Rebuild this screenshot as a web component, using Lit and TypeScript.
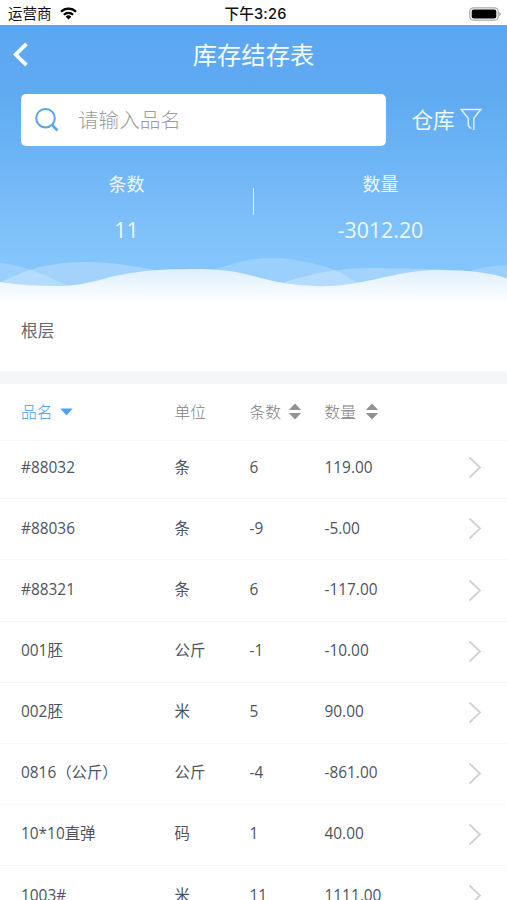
import { LitElement, html, svg, css } from "lit";
import { customElement } from "lit/decorators.js";

interface Item {
  name: string;
  unit: string;
  count: string;
  qty: string;
}

const items: Item[] = [
  { name: "#88032", unit: "条", count: "6", qty: "119.00" },
  { name: "#88036", unit: "条", count: "-9", qty: "-5.00" },
  { name: "#88321", unit: "条", count: "6", qty: "-117.00" },
  { name: "001胚", unit: "公斤", count: "-1", qty: "-10.00" },
  { name: "002胚", unit: "米", count: "5", qty: "90.00" },
  { name: "0816（公斤）", unit: "公斤", count: "-4", qty: "-861.00" },
  { name: "10*10直弹", unit: "码", count: "1", qty: "40.00" },
  { name: "1003#", unit: "米", count: "11", qty: "1111.00" },
];

const sortIcon = html`<svg class="sort" width="14" height="17" viewBox="0 0 14 17">
  <path d="M7 .5 13.2 7H.8zM7 16.5 13.2 10H.8z" fill="#929292" />
</svg>`;

const waves = svg`
  <defs>
    <linearGradient id="front" gradientUnits="userSpaceOnUse" x1="0" y1="12" x2="0" y2="50">
      <stop offset="0" stop-color="#dceefe" />
      <stop offset=".5" stop-color="#eff7fe" />
      <stop offset="1" stop-color="#fff" />
    </linearGradient>
  </defs>
  <path d="M0 8C14 9 24 13 34 16C48 21 58 27 70 31V60H0Z" fill="#fff" opacity=".2" />
  <path d="M0 28C18 18 44 7 85 7C112 7 134 11 155 15L180 40H0Z" fill="#fff" opacity=".25" />
  <path d="M213 15C236 7 252 3 272 3C298 3 316 9 332 14C345 19 354 26 364 32H213Z" fill="#fff" opacity=".2" />
  <path d="M285 27C310 19 336 13 370 13C400 13 430 14 450 15V36H285Z" fill="#fff" opacity=".25" />
  <path d="M470 16C482 12 494 10.500 507 10.500V40H470Z" fill="#fff" opacity=".2" />
  <path d="M0 27C20 30 38 31 57 31C88 31 100 23 128 18.500C152 14.500 172 14 200 14C236 14 254 22 278 27C300 31 324 33 350 29C384 24 404 15 440 15C470 15 492 18 507 23.500V60H0Z" fill="url(#front)" />
`;

@customElement("app-root")
export class AppRoot extends LitElement {
  static styles = css`
    :host {
      display: block;
      width: 507px;
      height: 900px;
      overflow: hidden;
      background: #fff;
      color: #4c545f;
      font-family: "Open Sans", "Noto Sans CJK SC", sans-serif;
    }
    svg {
      display: block;
      flex: none;
    }
    .status {
      display: grid;
      grid-template-columns: 1fr auto 1fr;
      align-items: center;
      height: 25px;
      padding: 2px 6px 0 8px;
      box-sizing: border-box;
      color: #111;
      font: 14.5px/20px "Inter", "Noto Sans CJK SC", sans-serif;
    }
    .carrier {
      display: flex;
      align-items: center;
      gap: 8px;
    }
    .clock {
      padding-left: 2px;
      font-weight: 500;
      font-size: 14.6px;
      letter-spacing: 0.2px;
    }
    .battery {
      justify-self: end;
    }
    .hero {
      position: relative;
      height: 280px;
      background: linear-gradient(#5ca7f1, #60aaf2 70px, #6bb4f5 130px, #7abcf8 180px, #84c5fc 235px);
      color: #fff;
    }
    .waves {
      position: absolute;
      left: 0;
      bottom: -10px;
    }
    .nav {
      display: grid;
      grid-template-columns: 60px 1fr 60px;
      align-items: center;
      height: 59px;
      padding-left: 13px;
      padding-right: 13px;
    }
    .title {
      padding-bottom: 2px;
      text-align: center;
      font: 400 24.3px/36px "Noto Sans CJK SC", sans-serif;
      color: #f4faff;
    }
    .tools {
      display: flex;
      align-items: center;
      padding: 10px 25px 0 21px;
    }
    .search {
      display: flex;
      align-items: center;
      gap: 19px;
      width: 364.5px;
      height: 51.5px;
      box-sizing: border-box;
      padding-left: 14px;
      border-radius: 5px;
      background: #fff;
      color: #9c9c9c;
      font: 300 20.6px/30px "Noto Sans CJK SC", sans-serif;
    }
    .search span,
    .filter span {
      padding-bottom: 2px;
    }
    .filter {
      display: flex;
      align-items: center;
      gap: 5px;
      margin-left: 26px;
      font: 400 21.6px/30px "Noto Sans CJK SC", sans-serif;
      color: #eff7ff;
    }
    .stats {
      display: grid;
      grid-template-columns: 1fr 1px 1fr;
      padding-top: 23px;
      text-align: center;
      color: #eff7ff;
    }
    .label {
      font: 400 18px/28px "Noto Sans CJK SC", sans-serif;
    }
    .value {
      margin-top: 17px;
      font-size: 21.3px;
      font-weight: 400;
      line-height: 32px;
    }
    .rule {
      height: 27px;
      margin-top: 19px;
      background: #e6f3ff;
    }
    .level {
      height: 65.500px;
      box-sizing: border-box;
      padding: 12px 21px;
      font: 400 16.7px/26px "Noto Sans CJK SC", sans-serif;
      color: #686868;
    }
    .band {
      height: 13.500px;
      background: #f5f6f8;
    }
    .head,
    .row {
      display: grid;
      grid-template-columns: 153.500px 75px 75px 1fr 14px;
      align-items: center;
      box-sizing: border-box;
      padding: 0 25px 0 21px;
      border-bottom: 1px solid #f5f5f5;
      white-space: nowrap;
    }
    .head {
      height: 57px;
      padding-bottom: 1px;
      font: 300 15.8px/24px "Noto Sans CJK SC", sans-serif;
      color: #828282;
    }
    .cell {
      display: flex;
      align-items: center;
      gap: 7px;
    }
    .wide {
      gap: 8.500px;
    }
    .active {
      color: #3f9beb;
    }
    .row {
      height: 61.100px;
      padding-bottom: 3px;
      font-size: 15.4px;
      line-height: 24px;
    }
    .row span {
      padding-top: 2px;
    }
    .row:first-of-type {
      height: 58.400px;
      padding-bottom: 6px;
    }
    .arrow {
      margin-top: 2px;
    }
  `;

  render() {
    return html`
      <header class="status">
        <span class="carrier">
          运营商
          <svg width="17" height="13" viewBox="0 0 17 13">
            <g fill="none" stroke="#000" stroke-width="2.300">
              <path d="M1 4.700A10.700 10.700 0 0 1 16 4.700" />
              <path d="M3.900 7.800A6.500 6.500 0 0 1 13.100 7.800" />
            </g>
            <path d="M8.500 12.500 5.700 9.700A4 4 0 0 1 11.300 9.700Z" />
          </svg>
        </span>
        <span class="clock">下午3:26</span>
        <svg class="battery" width="32" height="14" viewBox="0 0 32 14">
          <rect x=".8" y=".8" width="28.400" height="12.400" rx="3.800" fill="#fff" stroke="#aaa" stroke-width="1.200" />
          <rect x="2.700" y="2.500" width="24.600" height="9" rx="2" />
          <path d="M30.300 5v4q1.400-.5 1.400-2t-1.400-2z" fill="#999" />
        </svg>
      </header>

      <section class="hero">
        <svg class="waves" width="507" height="60" viewBox="0 0 507 60">${waves}</svg>
        <nav class="nav">
          <svg width="16" height="25" viewBox="0 0 16 25">
            <path d="M13.500 1.800 2.700 12.500 13.500 23.200" fill="none" stroke="#fff" stroke-width="3.800" />
          </svg>
          <span class="title">库存结存表</span>
        </nav>
        <div class="tools">
          <div class="search">
            <svg width="24" height="25" viewBox="0 0 24 25">
              <g fill="none" stroke="#55a5ea" stroke-width="2">
                <circle cx="10.500" cy="11.200" r="9.300" />
                <path d="M17 17.800 22.500 23.500" stroke-width="2.600" />
              </g>
            </svg>
            <span>请输入品名</span>
          </div>
          <div class="filter">
            <span>仓库</span>
            <svg width="22" height="23" viewBox="0 0 22 23">
              <path d="M13.800 22V10.200L20.800 1.500H1.200L8.200 10.200V17.600L11.200 20.400" fill="none" stroke="#e4f2ff" stroke-width="1.400" />
            </svg>
          </div>
        </div>
        <div class="stats">
          <div>
            <div class="label">条数</div>
            <div class="value">11</div>
          </div>
          <div class="rule"></div>
          <div>
            <div class="label">数量</div>
            <div class="value">-3012.20</div>
          </div>
        </div>
      </section>

      <section class="level">根层</section>
      <section class="band"></section>

      <section class="head">
        <span class="cell active">
          品名
          <svg width="13" height="8" viewBox="0 0 13 8"><path d="M.3.500H12.700L6.500 7.500z" fill="#4ea4ec" /></svg>
        </span>
        <span>单位</span>
        <span class="cell">条数${sortIcon}</span>
        <span class="cell wide">数量${sortIcon}</span>
      </section>
      <main>
        ${items.map(
          (item) => html`<div class="row">
            <span>${item.name}</span>
            <span>${item.unit}</span>
            <span>${item.count}</span>
            <span>${item.qty}</span>
            <svg class="arrow" width="14" height="23" viewBox="0 0 14 23">
              <path d="M1.500 1.500 12 11.500 1.500 21.500" fill="none" stroke="#d2d2d2" stroke-width="1.900" />
            </svg>
          </div>`
        )}
      </main>
    `;
  }
}
